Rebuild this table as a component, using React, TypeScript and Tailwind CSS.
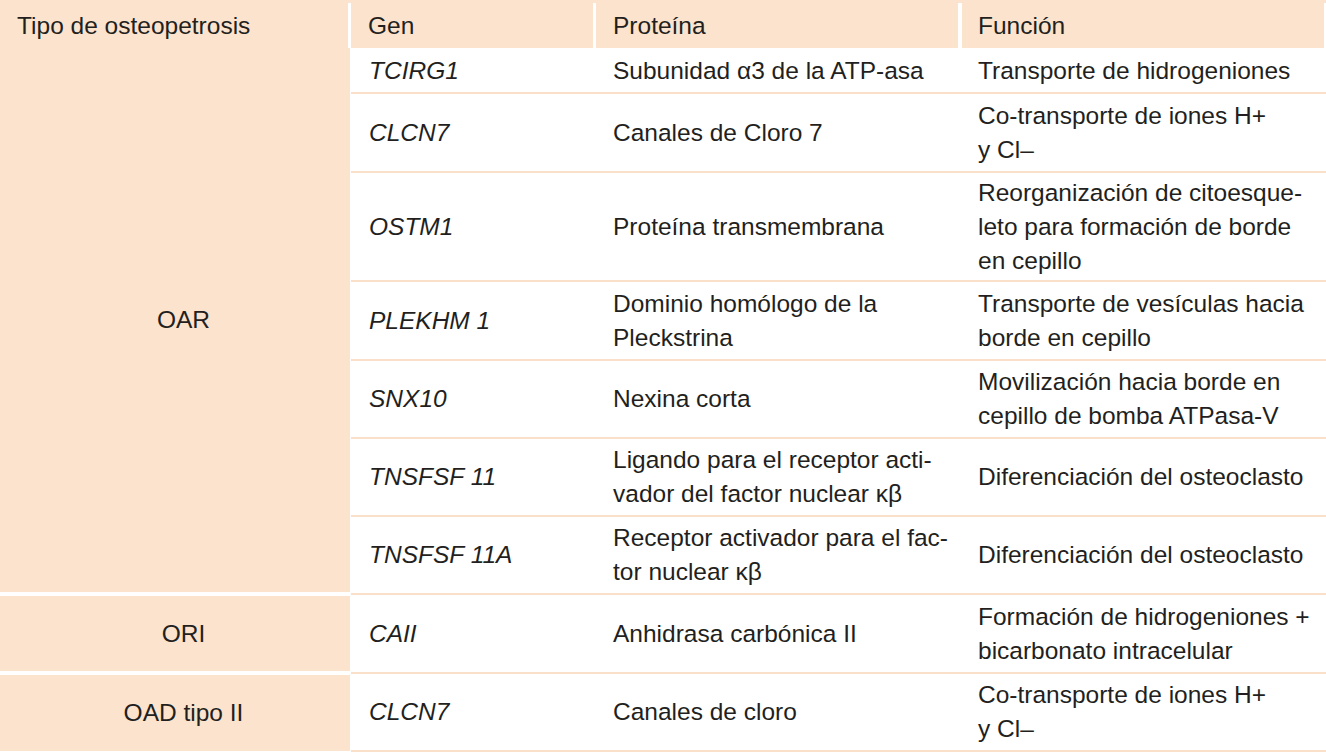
import React from 'react'

type Row = { gen: string; proteina: React.ReactNode; funcion: React.ReactNode; h: string }

const groups: { tipo: string; rows: Row[]; leftClass: string }[] = [
  {
    tipo: 'OAR',
    leftClass: '-mt-[2px] mb-[3px]',
    rows: [
      { gen: 'TCIRG1', proteina: 'Subunidad α3 de la ATP-asa', funcion: 'Transporte de hidrogeniones', h: 'h-[44px]' },
      { gen: 'CLCN7', proteina: 'Canales de Cloro 7', funcion: <>Co-transporte de iones H+<br />y Cl–</>, h: 'h-[79px]' },
      {
        gen: 'OSTM1',
        proteina: 'Proteína transmembrana',
        funcion: <>Reorganización de citoesque-<br />leto para formación de borde<br />en cepillo</>,
        h: 'h-[109px]',
      },
      {
        gen: 'PLEKHM 1',
        proteina: <>Dominio homólogo de la<br />Pleckstrina</>,
        funcion: <>Transporte de vesículas hacia<br />borde en cepillo</>,
        h: 'h-[79px]',
      },
      { gen: 'SNX10', proteina: 'Nexina corta', funcion: <>Movilización hacia borde en<br />cepillo de bomba ATPasa-V</>, h: 'h-[78px]' },
      {
        gen: 'TNSFSF 11',
        proteina: <>Ligando para el receptor acti-<br />vador del factor nuclear κβ</>,
        funcion: 'Diferenciación del osteoclasto',
        h: 'h-[78px]',
      },
      {
        gen: 'TNSFSF 11A',
        proteina: <>Receptor activador para el fac-<br />tor nuclear κβ</>,
        funcion: 'Diferenciación del osteoclasto',
        h: 'h-[78px]',
      },
    ],
  },
  {
    tipo: 'ORI',
    leftClass: 'mt-[1px] mb-[3px]',
    rows: [
      {
        gen: 'CAII',
        proteina: 'Anhidrasa carbónica II',
        funcion: <>Formación de hidrogeniones +<br />bicarbonato intracelular</>,
        h: 'h-[79px]',
      },
    ],
  },
  {
    tipo: 'OAD tipo II',
    leftClass: 'mt-[1px] mb-[1px]',
    rows: [{ gen: 'CLCN7', proteina: 'Canales de cloro', funcion: <>Co-transporte de iones H+<br />y Cl–</>, h: 'h-[78px]' }],
  },
]

export default function App() {
  return (
    <div className="w-[1326px] h-[755px] overflow-hidden bg-white text-[24.5px] leading-[34px] text-[#231f20] font-[Liberation_Sans,Arial,sans-serif]">
      {/* header */}
      <div className="mb-[2px] flex h-[48px] bg-[#fbe3cd] pt-[3px]">
        <div className="flex w-[348px] items-center bg-[#fbe3cd] pl-[17px]">Tipo de osteopetrosis</div>
        <div className="w-[3px] bg-white" />
        <div className="flex w-[242px] items-center bg-[#fbe3cd] pl-[17px]">Gen</div>
        <div className="w-[3px] bg-white" />
        <div className="flex w-[362px] items-center bg-[#fbe3cd] pl-[17px]">Proteína</div>
        <div className="w-[4px] bg-white" />
        <div className="flex w-[362px] items-center bg-[#fbe3cd] pl-[16px]">Función</div>
        <div className="w-[2px] bg-white" />
      </div>

      {groups.map((g) => (
        <div key={g.tipo} className="flex">
          <div className={`flex w-[350px] items-center justify-center bg-[#fbe3cd] pl-[17px] ${g.leftClass}`}>{g.tipo}</div>
          <div className="flex flex-1 flex-col pl-[1px]">
            {g.rows.map((r) => (
              <div key={r.gen + g.tipo} className={`flex ${r.h} border-b-2 border-[#fbe0c9]`}>
                <div className="flex w-[245px] items-center pl-[18px] italic">{r.gen}</div>
                <div className="flex w-[365px] items-center pl-[17px]">
                  <span>{r.proteina}</span>
                </div>
                <div className="flex flex-1 items-center pl-[17px]">
                  <span>{r.funcion}</span>
                </div>
              </div>
            ))}
          </div>
        </div>
      ))}
    </div>
  )
}
